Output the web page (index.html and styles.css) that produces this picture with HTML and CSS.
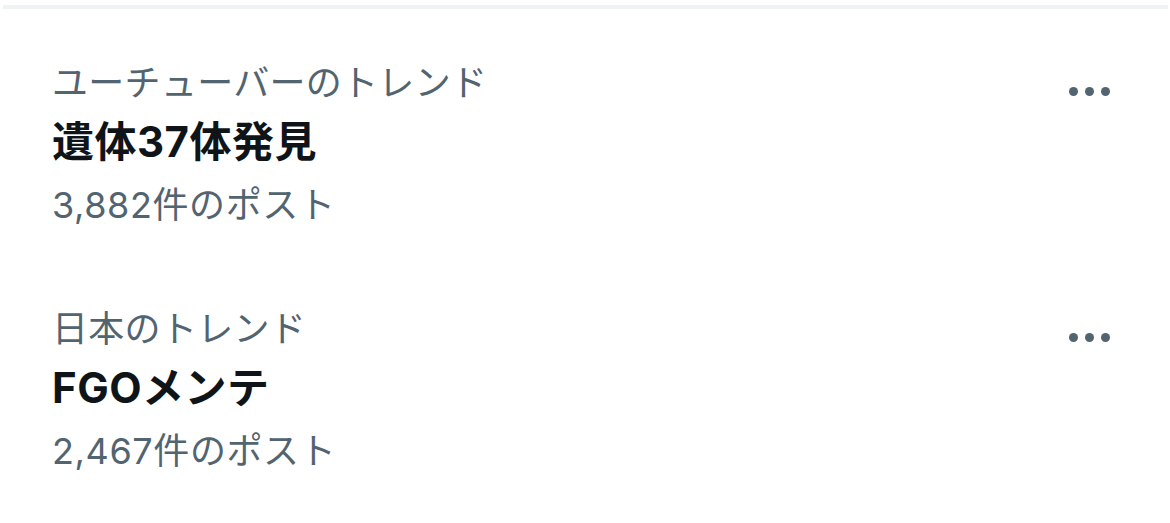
FILE: index.html
```html
<!DOCTYPE html>
<html lang="ja">
<head>
<meta charset="utf-8">
<link rel="stylesheet" href="styles.css">
</head>
<body>
<div class="panel">
  <div class="trend">
    <div class="text">
      <div class="meta">ユーチューバーのトレンド</div>
      <div class="title">遺体37体発見</div>
      <div class="meta count">3,882件のポスト</div>
    </div>
    <div class="more"><span class="dot"></span><span class="dot"></span><span class="dot"></span></div>
  </div>
  <div class="trend">
    <div class="text">
      <div class="meta">日本のトレンド</div>
      <div class="title">FGOメンテ</div>
      <div class="meta count">2,467件のポスト</div>
    </div>
    <div class="more"><span class="dot"></span><span class="dot"></span><span class="dot"></span></div>
  </div>
</div>
</body>
</html>
```
FILE: styles.css
```css
html, body {
  margin: 0;
  padding: 0;
  background: #ffffff;
}
body {
  font-family: "Inter", "Noto Sans CJK JP", sans-serif;
}
.panel {
  margin: 5px 2px 0 3px;
  border-top: 4px solid #eff3f4;
  padding-top: 14px;
}
.trend {
  display: flex;
  justify-content: space-between;
  align-items: flex-start;
  padding: 29px 0 33px 49px;
}
.text {
  display: flex;
  flex-direction: column;
}
.meta {
  font-size: 36px;
  line-height: 62px;
  letter-spacing: 0.3px;
  color: #536471;
}
.title {
  font-size: 42px;
  line-height: 62px;
  margin-top: -3px;
  letter-spacing: 0.5px;
  font-weight: 700;
  color: #0f1419;
}
.count {
  margin-top: 1px;
  letter-spacing: 0.6px;
}
.more {
  display: flex;
  gap: 7px;
  margin-top: 35px;
  margin-right: 58px;
}
.dot {
  width: 9px;
  height: 9px;
  border-radius: 50%;
  background: #536471;
}
```
